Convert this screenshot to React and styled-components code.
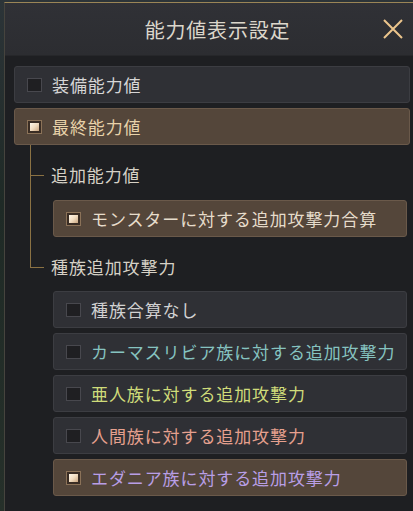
import React from 'react';
import styled, { createGlobalStyle } from 'styled-components';

const GlobalStyle = createGlobalStyle`
    html, body {
        margin: 0;
        padding: 0;
        height: 100%;
        overflow: hidden;
    }
    body {
        background: linear-gradient(180deg, #2c3438 0%, #1f2a26 40%, #26302a 100%);
        font-family: "Noto Sans CJK JP", "Noto Sans", sans-serif;
    }
`;

const Panel = styled.div`
    margin: 2px 0 0 4px;
    min-height: 520px;
    background-color: #1e1f22;
    border-top: 1px solid #9a8556;
    border-left: 1px solid #46443e;
    box-sizing: border-box;
`;

const Header = styled.div`
    height: 52px;
    display: grid;
    grid-template-columns: 1fr auto 1fr;
    align-items: center;
    padding: 0 10px 0 27px;
    background: linear-gradient(180deg, #303136 0%, #2c2d31 100%);
    border-bottom: 1px solid #26272a;
`;

const Title = styled.div`
    grid-column: 2;
    font-size: 20px;
    letter-spacing: 0.8px;
    color: #dcd7cb;
`;

const CloseButton = styled.div`
    grid-column: 3;
    justify-self: end;
    width: 20px;
    height: 20px;
    display: flex;
    cursor: pointer;
`;

const Body = styled.div`
    padding: 10px 3px 0 9px;
    display: flex;
    flex-direction: column;
`;

const Option = styled.div`
    height: 37px;
    box-sizing: border-box;
    display: flex;
    align-items: center;
    gap: 10px;
    padding-left: 12px;
    border-radius: 3px;
    background-color: ${p => p.$checked ? '#54463a' : '#2f3035'};
    border: 1px solid ${p => p.$checked ? '#6a594a' : '#3c3d42'};
    margin-bottom: ${p => p.$last ? 0 : 5}px;
    margin-left: ${p => p.$nested ? 2 : 0}px;
    margin-right: ${p => p.$nested ? 3 : 0}px;
`;

const Box = styled.span`
    width: 15px;
    height: 14px;
    box-sizing: border-box;
    flex: none;
    display: flex;
    align-items: center;
    justify-content: center;
    background-color: ${p => p.$checked ? '#3a2d24' : '#1f1f22'};
    border: 1px solid ${p => p.$checked ? '#8b7258' : '#48484e'};

    & > i {
        display: ${p => p.$checked ? 'block' : 'none'};
        width: 9px;
        height: 8px;
        background: linear-gradient(135deg, #fff8ea 0%, #f1dcc0 50%, #c9a57f 100%);
    }
`;

const Label = styled.span`
    font-size: 17px;
    letter-spacing: 0.9px;
    color: ${p => p.$color};
    white-space: nowrap;
`;

const Tree = styled.div`
    margin-left: 16px;
    display: flex;
    flex-direction: column;
`;

const Node = styled.div`
    position: relative;
    padding: 15px 0 0 21px;

    &::before {
        content: '';
        position: absolute;
        left: 0;
        top: 0;
        width: 1px;
        height: ${p => p.$last ? '30px' : '100%'};
        background-color: #8a7143;
    }
`;

const NodeTitle = styled.div`
    position: relative;
    height: 30px;
    line-height: 30px;
    font-size: 17px;
    letter-spacing: 0.9px;
    color: #d6d1c6;
    margin-bottom: ${p => p.$gap}px;

    &::before {
        content: '';
        position: absolute;
        left: -21px;
        top: 15px;
        width: 14px;
        height: 1px;
        background-color: #8a7143;
    }
`;

const Options = styled.div`
    display: flex;
    flex-direction: column;
`;

const CheckRow = ({ checked, nested, last, color, children }) => (
    <Option $checked={checked} $nested={nested} $last={last}>
        <Box $checked={checked}><i /></Box>
        <Label $color={color}>{children}</Label>
    </Option>
);

const races = [
    { name: '種族合算なし', color: '#d2d2d2' },
    { name: 'カーマスリビア族に対する追加攻撃力', color: '#86c3c0' },
    { name: '亜人族に対する追加攻撃力', color: '#cfdc7a' },
    { name: '人間族に対する追加攻撃力', color: '#e6a08e' },
    { name: 'エダニア族に対する追加攻撃力', color: '#b89ee6', checked: true },
];

const App = () => {
    return (
        <>
            <GlobalStyle />
            <Panel>
                <Header>
                    <Title>能力値表示設定</Title>
                    <CloseButton>
                        <svg width="20" height="20" viewBox="0 0 20 20">
                            <path d="M1 1 L19 19 M19 1 L1 19" stroke="#ecc58c" strokeWidth="2" />
                        </svg>
                    </CloseButton>
                </Header>
                <Body>
                    <CheckRow color="#d6d6d6">装備能力値</CheckRow>
                    <CheckRow checked last color="#e8d2a9">最終能力値</CheckRow>
                    <Tree>
                        <Node>
                            <NodeTitle $gap={10}>追加能力値</NodeTitle>
                            <Options>
                                <CheckRow checked nested last color="#e6dccb">モンスターに対する追加攻撃力合算</CheckRow>
                            </Options>
                        </Node>
                        <Node $last>
                            <NodeTitle $gap={9}>種族追加攻撃力</NodeTitle>
                            <Options>
                                {races.map(r => (
                                    <CheckRow key={r.name} nested checked={r.checked} color={r.color}>{r.name}</CheckRow>
                                ))}
                            </Options>
                        </Node>
                    </Tree>
                </Body>
            </Panel>
        </>
    );
};

export default App;
